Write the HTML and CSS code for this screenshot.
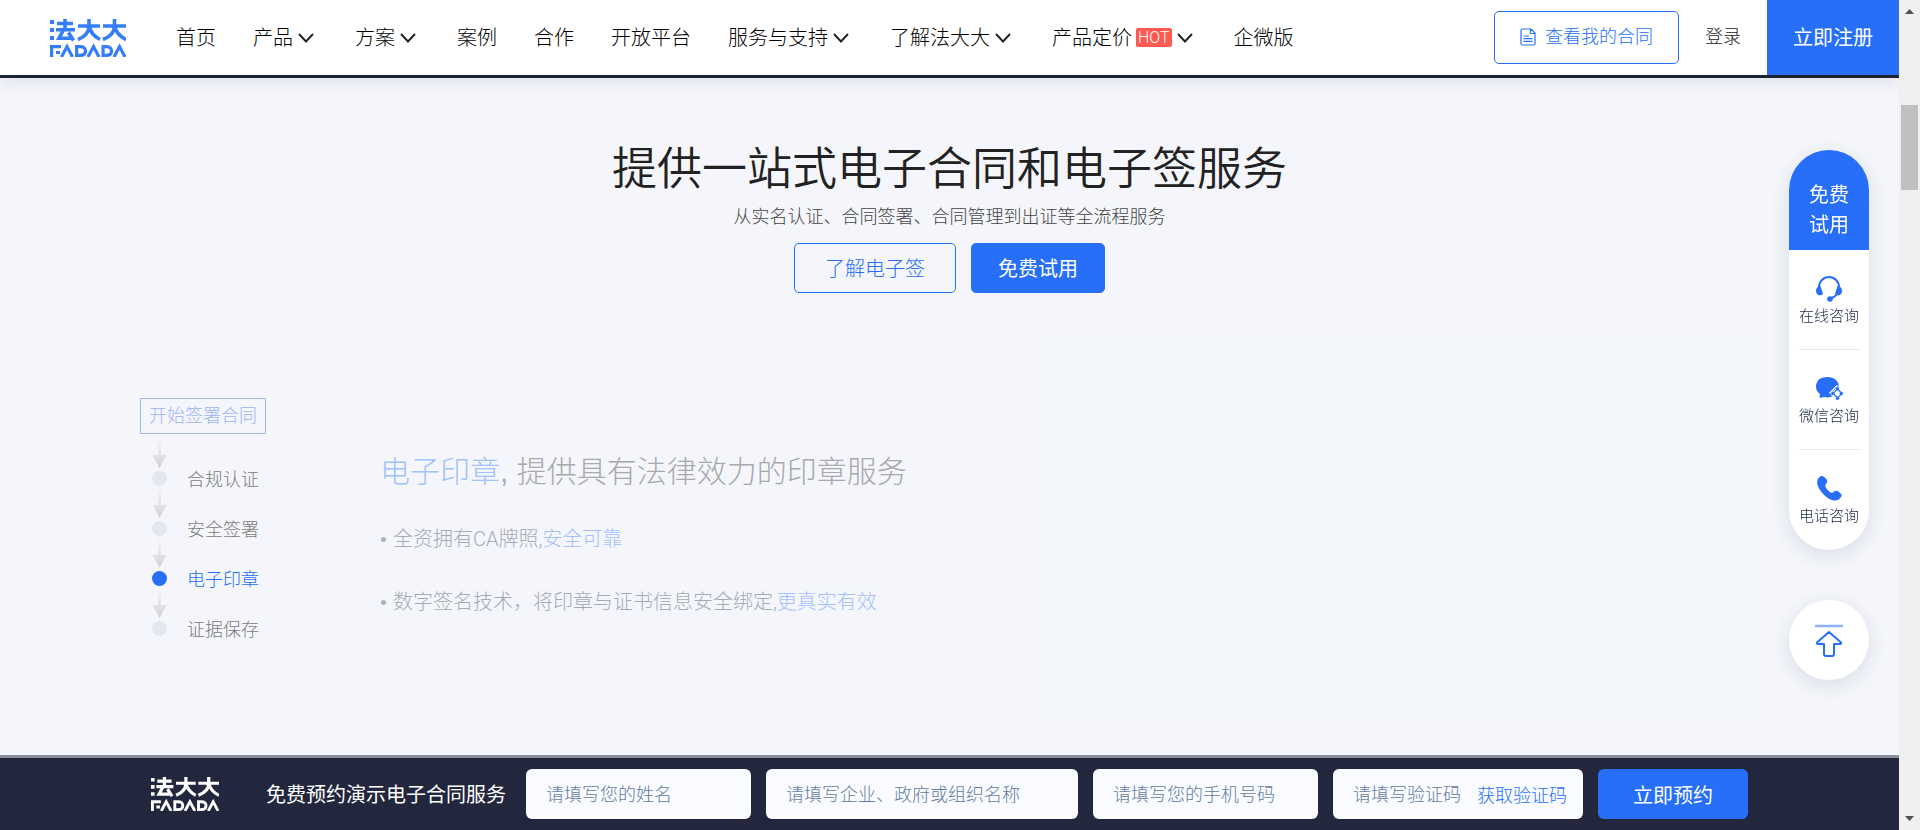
FILE: index.html
```html
<!DOCTYPE html>
<html lang="zh-CN">
<head>
<meta charset="utf-8">
<title>法大大</title>
<link rel="stylesheet" href="styles.css">
</head>
<body>
<svg class="defs" width="0" height="0" aria-hidden="true">
  <symbol id="logo" viewBox="0 0 76 38">
    <g fill="currentColor">
      <path d="M0 1h4v4H0zM0 9h4v4H0zM0 17h4v4H0z"/>
    </g>
    <g fill="none" stroke="currentColor" stroke-width="3.6">
      <path d="M7 4.500h16M15 0v11M6 10.800h19M13.500 11L9 19.200h13M18.500 13.500l5 8"/>
      <path d="M28 7h22M39 0v7q0 9-11 13.500M39 7q2 9 11 13.500"/>
      <path d="M53 7h23M64.500 0v7q0 9-11.500 13.500M64.500 7q2 9 11.500 13.500"/>
    </g>
    <g fill="none" stroke="currentColor" stroke-width="3.200">
      <path d="M1.600 38V27.600H11M6 33.500h4M11.500 38l5.500-10.400L22.500 38M26.600 26v10.400H30q5.500 0 5.500-4.400T30 27.600h-5M38 38l5.500-10.400L49 38M53.100 26v10.400H56q5.500 0 5.500-4.400T56 27.600h-4.500M64 38l5.500-10.400L75 38"/>
    </g>
  </symbol>
  <symbol id="chevron" viewBox="0 0 16 10"><path d="M1 1l7 7.500L15 1" fill="none" stroke="currentColor" stroke-width="1.900"/></symbol>
  <symbol id="down" viewBox="0 0 15 30">
    <linearGradient id="fade" x1="0" y1="0" x2="0" y2="1"><stop offset="0" stop-color="#d5d7da" stop-opacity="0"/><stop offset="1" stop-color="#cfd1d3"/></linearGradient>
    <path d="M6 0h3v17h5.500L7.500 30 .5 17H6z" fill="url(#fade)"/>
  </symbol>
</svg>

<div class="page">
  <header class="header">
    <a class="brand" href="#" aria-label="法大大"><svg><use href="#logo"/></svg></a>
    <nav class="nav">
      <a href="#">首页</a>
      <a href="#">产品<svg class="chev"><use href="#chevron"/></svg></a>
      <a href="#">方案<svg class="chev"><use href="#chevron"/></svg></a>
      <a href="#">案例</a>
      <a href="#">合作</a>
      <a href="#">开放平台</a>
      <a href="#">服务与支持<svg class="chev"><use href="#chevron"/></svg></a>
      <a href="#">了解法大大<svg class="chev"><use href="#chevron"/></svg></a>
      <a href="#">产品定价<span class="hot">HOT</span><svg class="chev"><use href="#chevron"/></svg></a>
      <a href="#">企微版</a>
    </nav>
    <div class="account">
      <a class="contracts" href="#">
        <svg viewBox="0 0 16 18" width="16" height="18" fill="none" stroke="currentColor" stroke-width="1.200"><path d="M2.500 1H11l4 4v10.500q0 1.500-1.500 1.500h-11Q1 17 1 15.500v-13Q1 1 2.500 1zM10.500 1v4.500H15M3.500 8H9M3.500 10.700h9M3.500 13.400h9"/></svg>
        查看我的合同
      </a>
      <a class="login" href="#">登录</a>
      <a class="register" href="#">立即注册</a>
    </div>
  </header>

  <main class="main">
    <section class="hero">
      <h1>提供一站式电子合同和电子签服务</h1>
      <p>从实名认证、合同签署、合同管理到出证等全流程服务</p>
      <div class="actions">
        <a class="btn outline" href="#">了解电子签</a>
        <a class="btn solid" href="#">免费试用</a>
      </div>
    </section>

    <section class="flow">
      <div class="steps">
        <span class="start">开始签署合同</span>
        <ol>
          <li><svg><use href="#down"/></svg><i></i><span>合规认证</span></li>
          <li><svg><use href="#down"/></svg><i></i><span>安全签署</span></li>
          <li class="active"><svg><use href="#down"/></svg><i></i><span>电子印章</span></li>
          <li><svg><use href="#down"/></svg><i></i><span>证据保存</span></li>
        </ol>
      </div>
      <div class="detail">
        <h2><em>电子印章</em>, 提供具有法律效力的印章服务</h2>
        <ul>
          <li>全资拥有CA牌照,<em>安全可靠</em></li>
          <li>数字签名技术，将印章与证书信息安全绑定,<em>更真实有效</em></li>
        </ul>
      </div>
      <div class="visual"></div>
    </section>
  </main>

  <form class="booking">
    <div class="booking-inner">
      <svg class="mini-logo"><use href="#logo"/></svg>
      <strong>免费预约演示电子合同服务</strong>
      <input class="field" type="text" aria-label="姓名" placeholder="请填写您的姓名">
      <input class="field wide" type="text" aria-label="组织名称" placeholder="请填写企业、政府或组织名称">
      <input class="field" type="tel" aria-label="手机号码" placeholder="请填写您的手机号码">
      <div class="field code">
        <input type="text" aria-label="验证码" placeholder="请填写验证码">
        <button type="button">获取验证码</button>
      </div>
      <button class="submit" type="button">立即预约</button>
    </div>
  </form>
</div>

<aside class="side">
  <div class="pill">
    <a class="trial" href="#">免费<br>试用</a>
    <a class="contact" href="#">
      <svg viewBox="0 0 28 28"><path d="M4 14v-1a10 10 0 0 1 20 0v1q0 8-9 10.500" fill="none" stroke="currentColor" stroke-width="2"/><path d="M5.500 12L8 20q-2 2-4.500 1Q1 20 1 16.500 1.500 12 5.500 12zM22.500 12L20 20q2 2 4.500 1 2.500-1 2.500-4.500-.5-4.500-4.500-4.500z" fill="currentColor"/><circle cx="15" cy="25" r="2.800" fill="currentColor"/></svg>
      在线咨询
    </a>
    <a class="contact" href="#">
      <svg viewBox="0 0 28 28"><path d="M12.500 3C19 3 24 7 24 13l-2 .5-6.500 6 1.500 3q-4 1.500-8 .5L4.500 24l.5-4Q1 17 1 13 1 3 12.500 3z" fill="currentColor"/><path d="M22.500 15l4.500 4.500-4.500 4.500-4.500-4.500z" fill="#fff" stroke="currentColor" stroke-width="1.200"/><g fill="currentColor"><circle cx="22.500" cy="14.800" r="1.700"/><circle cx="22.500" cy="24.300" r="1.700"/><circle cx="17.800" cy="19.500" r="1.700"/><circle cx="26.300" cy="19.500" r="1.700"/></g><path d="M14.500 19.500l7-7.500h3" fill="none" stroke="#fff" stroke-width="1.200"/></svg>
      微信咨询
    </a>
    <a class="contact" href="#">
      <svg viewBox="0 0 28 28"><path d="M7 2q2 0 5 4 1 2-1 4-1.500 1-.5 3 2 4 5 5.500 2 1 3-.5 2-2 4-1 5 3 4 5-2 5-8 4.500Q12 25 6 17.500 1 11 2.500 6 4 2 7 2z" fill="currentColor"/></svg>
      电话咨询
    </a>
  </div>
  <a class="top" href="#" aria-label="返回顶部">
    <svg viewBox="0 0 28 34"><path d="M0 2h28" stroke="#8fb3ff" stroke-width="2.500"/><path d="M14 8L2 18.500q-.5 1.500 1 1.500h6v10q0 2 2 2h6q2 0 2-2V20h6q1.500 0 1-1.500z" fill="none" stroke="currentColor" stroke-width="2" stroke-linejoin="round"/></svg>
  </a>
</aside>

<div class="scrollbar" aria-hidden="true">
  <svg viewBox="0 0 9 5"><path d="M0 5l4.500-5L9 5z"/></svg>
  <div class="thumb"></div>
  <svg viewBox="0 0 9 5"><path d="M0 0l4.500 5L9 0z"/></svg>
</div>
</body>
</html>
```
FILE: styles.css
```css
* { box-sizing: border-box; }
body {
  margin: 0;
  height: 100vh;
  overflow: hidden;
  background: #f4f6fb;
  color: #222;
  font-family: "Liberation Sans", "Noto Sans CJK SC", sans-serif;
  font-weight: 300;
  font-size: 18px;
}
a { color: inherit; text-decoration: none; }
em, i { font-style: normal; }
button, input { font: inherit; border: 0; }
.defs { position: absolute; }

.page {
  display: flex;
  flex-direction: column;
  height: 100vh;
  margin-right: 21px;
}

.header {
  display: flex;
  align-items: center;
  height: 78px;
  background: #fff;
  border-bottom: 3px solid #1c2430;
  box-shadow: 0 4px 16px rgba(30, 40, 70, .1);
}
.brand { margin: 0 50px; height: 38px; color: #367dfa; }
.brand svg { display: block; width: 76px; height: 38px; }
.nav { display: flex; gap: 37px; font-size: 20px; line-height: 30px; white-space: nowrap; color: #000; }
.nav a { display: flex; align-items: center; }
.chev { width: 16px; height: 10px; margin: 0 4px 0 5px; color: #222; }
.hot {
  margin-left: 4px;
  padding: 0 2px;
  border-radius: 2px;
  background: #ff5a50;
  color: #fff;
  font-family: Roboto, sans-serif;
  font-size: 16px;
  line-height: 19px;
}
.account { display: flex; align-items: center; align-self: stretch; margin-left: auto; white-space: nowrap; line-height: 26px; }
.contracts {
  display: flex;
  align-items: center;
  gap: 9px;
  height: 53px;
  padding: 0 25px 2px;
  border: 1px solid #276ff9;
  border-radius: 5px;
  color: #276ff9;
}
.login { margin: 0 26px; padding-bottom: 2px; }
.register {
  display: flex;
  align-items: center;
  align-self: stretch;
  padding: 0 26px;
  background: #276ff9;
  color: #fff;
  font-size: 20px;
  font-weight: 400;
}

.main { flex: 1; }
.hero { display: flex; flex-direction: column; align-items: center; padding-top: 60px; }
h1 { margin: 0; font-size: 45px; font-weight: 350; line-height: 64px; }
.hero p { margin: 0; line-height: 30px; color: #444; }
.actions { display: flex; gap: 15px; margin-top: 11px; font-size: 20px; }
.btn {
  display: flex;
  align-items: center;
  height: 50px;
  padding: 0 26px 2px;
  border-radius: 5px;
  border: 1px solid #276ff9;
}
.outline { padding: 0 30px 2px; color: #276ff9; }
.solid { background: #276ff9; color: #fff; font-weight: 400; }

.flow { display: flex; align-items: flex-start; margin: 49px 140px 0; }
.steps { width: 240px; padding-top: 56px; }
.start {
  display: inline-block;
  padding: 1px 8px 0;
  border: 1px solid #a3b8f6;
  color: #9db3f6;
  line-height: 33px;
}
.steps ol { margin: 4px 0 0; padding: 0 0 0 12px; list-style: none; color: #7c7c7c; }
.steps li {
  display: grid;
  grid-template-columns: 15px auto;
  grid-template-rows: 31px 15px;
  column-gap: 20px;
  row-gap: 2px;
  margin-bottom: 2px;
}
.steps li svg { width: 15px; height: 30px; }
.steps i { grid-row: 2; width: 15px; height: 15px; border-radius: 50%; background: #e3e7ef; }
.steps li span { grid-row: 2; line-height: 18px; }
.steps .active { color: #276ff9; }
.active i { background: #276ff9; }

.detail { flex: 1; padding-top: 108px; color: #a5abb5; font-family: Roboto, "Noto Sans CJK SC", sans-serif; }
.detail em { color: #a3c2fc; }
h2 { margin: 0; color: #a8a9ac; font-family: "Liberation Sans", "Noto Sans CJK SC", sans-serif; font-size: 30px; font-weight: 300; line-height: 44px; }
.detail ul { margin: 30px 0 0; padding: 0; list-style: none; font-size: 20px; line-height: 30px; }
.detail li { display: flex; align-items: center; margin-bottom: 33px; }
.detail li::before { content: ""; width: 5px; height: 5px; margin: 0 7px 0 1px; border-radius: 50%; background: #adb2bb; }
.visual { width: 711px; height: 377px; background: #f1f6fa; }

.booking { border-top: 3px solid #8d909c; background: #23273d; }
.booking-inner { display: flex; align-items: center; gap: 15px; width: max-content; height: 72px; margin: 0 auto; color: #fff; }
.mini-logo { width: 68px; height: 34px; margin-right: 32px; }
.booking strong { margin-right: 5px; padding-bottom: 2px; font-size: 20px; font-weight: 400; }
.field { width: 225px; height: 50px; padding: 2px 20px 0; border-radius: 6px; background: #fafbff; }
.wide { width: 312px; }
.booking ::placeholder { color: #647ca0; opacity: 1; }
.code { display: flex; align-items: center; justify-content: space-between; width: 250px; padding: 0 16px 0 20px; }
.code input { flex: 1; min-width: 0; padding: 2px 0 0; background: none; }
.code button { padding: 0; background: none; color: #276ff9; }
.submit { width: 150px; height: 50px; border-radius: 6px; background: #276ff9; color: #fff; font-size: 20px; font-weight: 400; }

.side { position: fixed; top: 150px; right: 51px; width: 80px; color: #276ff9; }
.pill { overflow: hidden; border-radius: 40px; background: #fff; box-shadow: 0 5px 20px rgba(30, 40, 70, .12); }
.trial { display: block; height: 100px; padding-top: 30px; background: #276ff9; color: #fff; font-size: 20px; font-weight: 400; line-height: 30px; text-align: center; }
.contact { display: flex; flex-direction: column; align-items: center; height: 100px; margin: 0 10px; padding-top: 24px; color: #1c2944; font-size: 15px; line-height: 24px; white-space: nowrap; }
.contact:not(:last-child) { border-bottom: 1px solid #e6e7ea; }
.contact svg { width: 28px; height: 28px; margin-bottom: 2px; color: #276ff9; }
.top { display: flex; align-items: center; justify-content: center; height: 80px; margin-top: 50px; padding-top: 2px; border-radius: 50%; background: #fff; box-shadow: 0 5px 20px rgba(30, 40, 70, .12); }
.top svg { width: 28px; height: 34px; }

.scrollbar {
  position: fixed;
  inset: 0 0 0 auto;
  display: flex;
  flex-direction: column;
  align-items: center;
  justify-content: space-between;
  width: 21px;
  padding: 9px 0;
  background: #f0f0f0;
}
.scrollbar svg { width: 9px; height: 5px; fill: #505050; }
.thumb { width: 17px; height: 85px; margin: 91px 0 auto; background: #c0c0c0; }
```
